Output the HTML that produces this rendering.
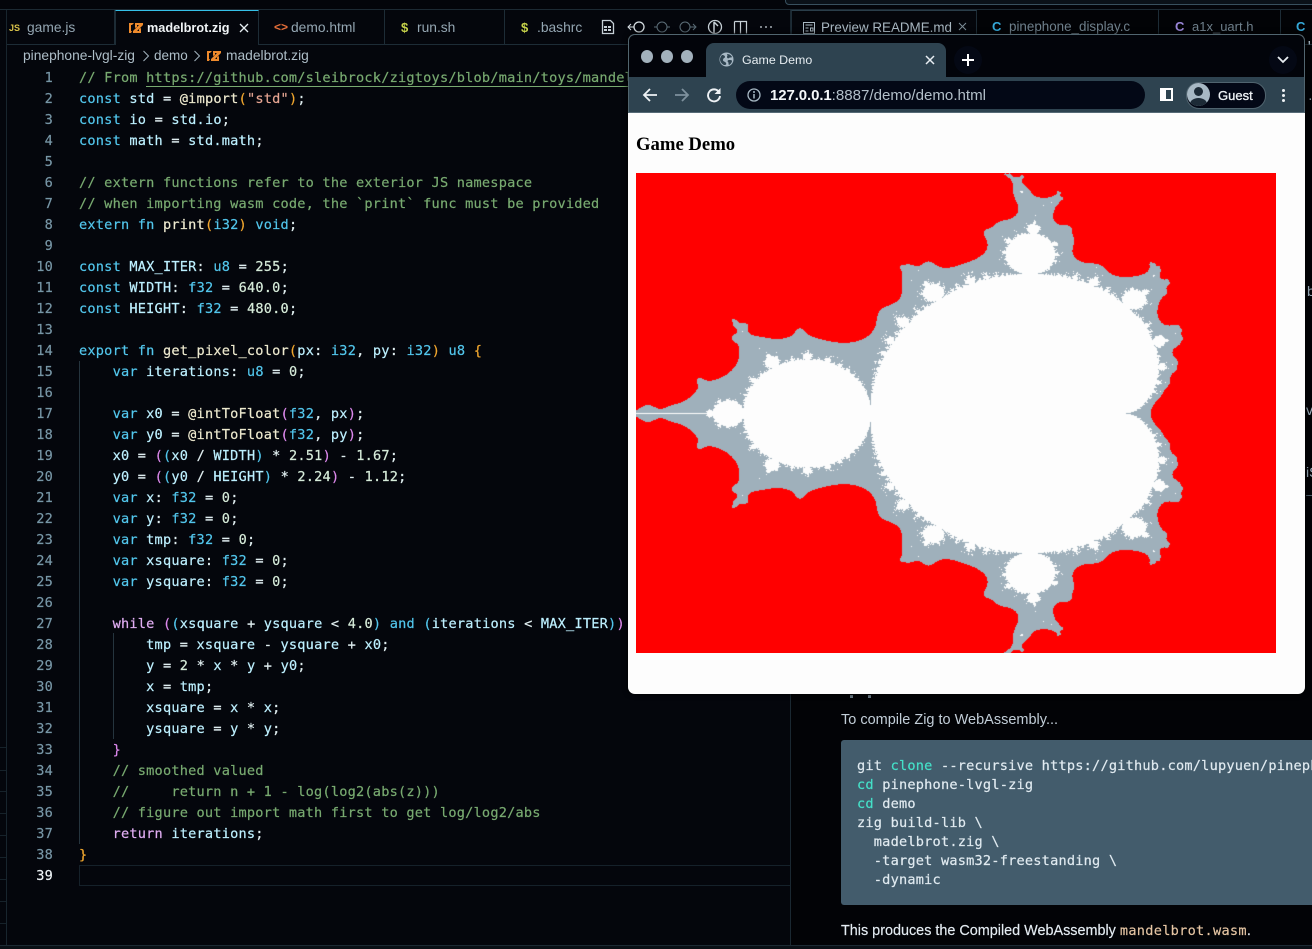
<!DOCTYPE html>
<html><head><meta charset="utf-8">
<style>
html,body{margin:0;padding:0;background:#04060c;width:1312px;height:949px;overflow:hidden}
.a{position:absolute}
#code,#nums{position:absolute;top:68px;margin:0;font:13.6px/21px "DejaVu Sans Mono","Liberation Mono",monospace;letter-spacing:.21px;white-space:pre;-webkit-text-stroke:.2px}
#code{left:79px;color:#bdf0ff}
#nums{left:20px;width:33px;text-align:right;color:#7796a6}
#nums b{color:#eef4f7;font-weight:normal}
.c{color:#78aa70}.k{color:#52c6ec}.f{color:#eeeacf}.s{color:#e6a592}.o{color:#f0a62e}.p{color:#dc88ec}.n{color:#d6ebd9}.w{color:#e0adf2}.t{color:#52c6ec}.u{color:#e0eef0}
.tab{position:absolute;top:10px;height:34px;border-right:1px solid #1d2c36;font:13.8px/36px "Liberation Sans",sans-serif;color:#94a6b2;box-sizing:border-box;white-space:nowrap;overflow:hidden}
.tab span{position:absolute}
.ic{position:absolute;font-weight:bold}
</style></head><body>
<div class="a" style="left:0;top:0;width:1312px;height:949px;background:#04060c;overflow:hidden">

<!-- top bar -->
<div class="a" style="left:0;top:0;width:1312px;height:10px;background:#03050a;border-bottom:1px solid #1c2a33;box-sizing:border-box"></div>
<div class="a" style="left:785px;top:-8px;width:540px;height:11px;border:1px solid #38505e;border-radius:4px;background:#0a1118"></div>
<!-- left sidebar edge -->
<div class="a" style="left:6px;top:10px;width:1px;height:935px;background:#18252e"></div>
<div class="a" style="left:0;top:747px;width:6px;height:1px;background:#16222a"></div>
<div class="a" style="left:0;top:770px;width:6px;height:1px;background:#16222a"></div>
<div class="a" style="left:0;top:791px;width:6px;height:1px;background:#16222a"></div>
<div class="a" style="left:0;top:813px;width:6px;height:1px;background:#16222a"></div>
<div class="a" style="left:0;top:835px;width:6px;height:1px;background:#16222a"></div>
<div class="a" style="left:0;top:857px;width:6px;height:1px;background:#16222a"></div>
<div class="a" style="left:0;top:879px;width:6px;height:1px;background:#16222a"></div>
<div class="a" style="left:0;top:901px;width:6px;height:1px;background:#16222a"></div>
<div class="a" style="left:0;top:923px;width:6px;height:1px;background:#16222a"></div>
<div class="a" style="left:0;top:945px;width:1312px;height:1px;background:#1c2a33"></div>
<div class="a" style="left:0;top:946px;width:1312px;height:3px;background:#0a1016"></div>

<!-- left tabs -->
<div class="a" style="left:7px;top:44px;width:783px;height:1px;background:#1d2c36"></div>
<div class="tab" style="left:7px;width:108px;"><span class="ic" style="left:2px;font-size:9px;color:#d8c24a">JS</span><span style="left:20px">game.js</span></div>
<div class="tab" style="left:115px;width:144px;background:#04060c;border-top:1px solid #35c0e8;border-right:1px solid #1d2c36;border-left:1px solid #1d2c36;height:35px;color:#f0f4f6;font-weight:bold;font-size:12.7px;line-height:34px;z-index:2">
  <svg class="ic" style="left:13px;top:11px" width="14" height="12" viewBox="0 0 14 12"><path d="M0 1h5L3 3H2v6h1l-1 2H0zM6 1h8v2L8 9h2V7l2-1v5H4v-2l6-6H8v2L6 6z" fill="#ee8a2c"/></svg>
  <span style="left:31px">madelbrot.zig</span>
  <svg class="ic" style="left:123px;top:12px" width="10" height="10" viewBox="0 0 10 10"><path d="M1 1l8 8M9 1l-8 8" stroke="#e6eef2" stroke-width="1.3" fill="none"/></svg>
</div>
<div class="tab" style="left:259px;width:126px;"><span class="ic" style="left:15px;font-size:12px;color:#e8703a;top:-1px">&lt;&gt;</span><span style="left:32px">demo.html</span></div>
<div class="tab" style="left:385px;width:120px;"><span class="ic" style="left:16px;color:#c6d24a;font-size:13px">$</span><span style="left:32px">run.sh</span></div>
<div class="tab" style="left:505px;width:90px;border-right:none"><span class="ic" style="left:16px;color:#c6d24a;font-size:13px">$</span><span style="left:32px">.bashrc</span></div>

<!-- editor actions -->
<svg class="a" style="left:600px;top:18px" width="185" height="18" viewBox="0 0 185 18" fill="none" stroke="#c6d0d6" stroke-width="1">
  <path d="M2.500 2.500h8l3 3v10h-11z" stroke-width="1.300"/><path d="M4 8h3v2h-3zM8 8h3v2h-3zM4 11h3v2h-3zM8 11h3v2h-3z" fill="#c6d0d6" stroke="none"/>
  <circle cx="39" cy="9" r="5" stroke="#d6dee2" stroke-width="1.300"/><path d="M34 9h-6M31 6l-3 3 3 3" stroke="#d6dee2"/>
  <circle cx="62" cy="9" r="5" stroke="#5c6e78"/><path d="M57 9h-3M67 9h3" stroke="#5c6e78"/>
  <circle cx="85" cy="9" r="5" stroke="#5c6e78"/><path d="M90 9h5M93 6l3 3-3 3" stroke="#5c6e78"/>
  <circle cx="115" cy="9" r="6.500" stroke-width="1.300"/><path d="M114 4v11M114 4l4 4" stroke-width="1.500"/>
  <path d="M134.500 3.500h12v12M134.500 3.500v12M140.500 3.500v12" stroke-width="1.200"/>
  <path d="M160 9h2M165 9h2M170 9h2" stroke-width="1.300"/>
</svg>

<!-- breadcrumbs -->
<div class="a" style="left:23px;top:46px;height:20px;font:13.8px/20px 'Liberation Sans',sans-serif;color:#aebec8;white-space:pre">pinephone-lvgl-zig</div>
<svg class="a" style="left:142px;top:50px" width="8" height="12" viewBox="0 0 8 12"><path d="M1.500 1l5 5-5 5" stroke="#a3b4bf" fill="none"/></svg>
<div class="a" style="left:154px;top:46px;font:13.5px/20px 'Liberation Sans',sans-serif;color:#aebec8">demo</div>
<svg class="a" style="left:193px;top:50px" width="8" height="12" viewBox="0 0 8 12"><path d="M1.500 1l5 5-5 5" stroke="#a3b4bf" fill="none"/></svg>
<svg class="a" style="left:207px;top:50px" width="14" height="12" viewBox="0 0 14 12"><path d="M0 1h5L3 3H2v6h1l-1 2H0zM6 1h8v2L8 9h2V7l2-1v5H4v-2l6-6H8v2L6 6z" fill="#ee8a2c"/></svg>
<div class="a" style="left:226px;top:46px;font:13.8px/20px 'Liberation Sans',sans-serif;color:#aebec8">madelbrot.zig</div>

<!-- guides & current line -->
<div class="a" style="left:79px;top:361px;width:1px;height:483px;background:#25343e"></div>
<div class="a" style="left:113px;top:633px;width:1px;height:106px;background:#25343e"></div>
<div class="a" style="left:79px;top:865px;width:711px;height:21px;border:1px solid #15212a;border-right:none;box-sizing:border-box"></div>
<div class="a" style="left:146px;top:86px;width:500px;height:1px;background:#78aa70"></div>

<pre id="nums">1
2
3
4
5
6
7
8
9
10
11
12
13
14
15
16
17
18
19
20
21
22
23
24
25
26
27
28
29
30
31
32
33
34
35
36
37
38
<b>39</b></pre>
<pre id="code"><span class="c">// From https://github.com/sleibrock/zigtoys/blob/main/toys/mandelbrot.zig</span>
<span class="k">const</span> std <span class="u">=</span> <span class="f">@import</span><span class="o">(</span><span class="s">"std"</span><span class="o">)</span><span class="u">;</span>
<span class="k">const</span> io <span class="u">=</span> std.io<span class="u">;</span>
<span class="k">const</span> math <span class="u">=</span> std.math<span class="u">;</span>

<span class="c">// extern functions refer to the exterior JS namespace</span>
<span class="c">// when importing wasm code, the `print` func must be provided</span>
<span class="k">extern fn</span> <span class="f">print</span><span class="o">(</span><span class="k">i32</span><span class="o">)</span> <span class="k">void</span><span class="u">;</span>

<span class="k">const</span> MAX_ITER<span class="u">:</span> <span class="k">u8</span> <span class="u">=</span> <span class="n">255</span><span class="u">;</span>
<span class="k">const</span> WIDTH<span class="u">:</span> <span class="k">f32</span> <span class="u">=</span> <span class="n">640.0</span><span class="u">;</span>
<span class="k">const</span> HEIGHT<span class="u">:</span> <span class="k">f32</span> <span class="u">=</span> <span class="n">480.0</span><span class="u">;</span>

<span class="k">export fn</span> <span class="f">get_pixel_color</span><span class="o">(</span>px<span class="u">:</span> <span class="k">i32</span><span class="u">,</span> py<span class="u">:</span> <span class="k">i32</span><span class="o">)</span> <span class="k">u8</span> <span class="o">{</span>
    <span class="k">var</span> iterations<span class="u">:</span> <span class="k">u8</span> <span class="u">=</span> <span class="n">0</span><span class="u">;</span>

    <span class="k">var</span> x0 <span class="u">=</span> <span class="f">@intToFloat</span><span class="p">(</span><span class="k">f32</span><span class="u">,</span> px<span class="p">)</span><span class="u">;</span>
    <span class="k">var</span> y0 <span class="u">=</span> <span class="f">@intToFloat</span><span class="p">(</span><span class="k">f32</span><span class="u">,</span> py<span class="p">)</span><span class="u">;</span>
    x0 <span class="u">=</span> <span class="p">(</span><span class="t">(</span>x0 <span class="u">/</span> WIDTH<span class="t">)</span> <span class="u">*</span> <span class="n">2.51</span><span class="p">)</span> <span class="u">-</span> <span class="n">1.67</span><span class="u">;</span>
    y0 <span class="u">=</span> <span class="p">(</span><span class="t">(</span>y0 <span class="u">/</span> HEIGHT<span class="t">)</span> <span class="u">*</span> <span class="n">2.24</span><span class="p">)</span> <span class="u">-</span> <span class="n">1.12</span><span class="u">;</span>
    <span class="k">var</span> x<span class="u">:</span> <span class="k">f32</span> <span class="u">=</span> <span class="n">0</span><span class="u">;</span>
    <span class="k">var</span> y<span class="u">:</span> <span class="k">f32</span> <span class="u">=</span> <span class="n">0</span><span class="u">;</span>
    <span class="k">var</span> tmp<span class="u">:</span> <span class="k">f32</span> <span class="u">=</span> <span class="n">0</span><span class="u">;</span>
    <span class="k">var</span> xsquare<span class="u">:</span> <span class="k">f32</span> <span class="u">=</span> <span class="n">0</span><span class="u">;</span>
    <span class="k">var</span> ysquare<span class="u">:</span> <span class="k">f32</span> <span class="u">=</span> <span class="n">0</span><span class="u">;</span>

    <span class="w">while</span> <span class="p">(</span><span class="t">(</span>xsquare <span class="u">+</span> ysquare <span class="u">&lt;</span> <span class="n">4.0</span><span class="t">)</span> <span class="k">and</span> <span class="t">(</span>iterations <span class="u">&lt;</span> MAX_ITER<span class="t">)</span><span class="p">)</span> <span class="p">{</span>
        tmp <span class="u">=</span> xsquare <span class="u">-</span> ysquare <span class="u">+</span> x0<span class="u">;</span>
        y <span class="u">=</span> <span class="n">2</span> <span class="u">*</span> x <span class="u">*</span> y <span class="u">+</span> y0<span class="u">;</span>
        x <span class="u">=</span> tmp<span class="u">;</span>
        xsquare <span class="u">=</span> x <span class="u">*</span> x<span class="u">;</span>
        ysquare <span class="u">=</span> y <span class="u">*</span> y<span class="u">;</span>
    <span class="p">}</span>
    <span class="c">// smoothed valued</span>
    <span class="c">//     return n + 1 - log(log2(abs(z)))</span>
    <span class="c">// figure out import math first to get log/log2/abs</span>
    <span class="w">return</span> iterations<span class="u">;</span>
<span class="o">}</span>
</pre>

<!-- right panel -->
<div class="a" style="left:790px;top:10px;width:522px;height:935px;background:#020306;border-left:1px solid #1a2831;box-sizing:border-box"></div>
<div class="tab" style="left:791px;width:186px;border-left:1px solid #1d2c36;border-top:1px solid #2a3e4a;background:#04060b;color:#a9b8c2;font-size:13.4px;line-height:33px">
  <svg class="ic" style="left:10px;top:10px" width="14" height="14" viewBox="0 0 14 14" fill="none" stroke="#a9b8c2"><path d="M1.500 1.500h11v11h-11zM3.500 4h7M3.500 7h3M3.500 10h3M8.500 7h2.500v3h-2.500z"/></svg>
  <span style="left:29px">Preview README.md</span>
  <svg class="ic" style="left:166px;top:11px" width="9" height="9" viewBox="0 0 9 9"><path d="M1 1l7 7M8 1l-7 7" stroke="#7d8e98" fill="none"/></svg>
</div>
<div class="tab" style="left:977px;width:182px;color:#6f808c;font-size:13.4px;line-height:34px"><span class="ic" style="left:15px;color:#35a8d8;font-size:13px">C</span><span style="left:32px">pinephone_display.c</span></div>
<div class="tab" style="left:1159px;width:122px;color:#6f808c;font-size:13px;line-height:34px"><span class="ic" style="left:16px;color:#9a86d8;font-size:13px">C</span><span style="left:33px">a1x_uart.h</span></div>
<div class="tab" style="left:1281px;width:31px;border-right:none;line-height:34px"><span class="ic" style="left:15px;color:#35a8d8;font-size:13px">C</span></div>
<div class="a" style="left:791px;top:44px;width:521px;height:1px;background:#1d2c36"></div>

<div class="a" style="left:1306px;top:41px;font:bold 11px/12px 'Liberation Mono',monospace;color:#a8bac6">':</div>
<div class="a" style="left:1307px;top:92px;font:11px/12px 'Liberation Mono',monospace;color:#8a9ca8">..</div>
<div class="a" style="left:1307px;top:283px;font:14px/16px 'Liberation Sans',sans-serif;color:#9fb2c0">b</div>
<div class="a" style="left:1306px;top:402px;font:14px/16px 'Liberation Sans',sans-serif;color:#9fb2c0">v</div>
<div class="a" style="left:1306px;top:464px;font:14px/16px 'Liberation Sans',sans-serif;color:#9fb2c0">iS</div>
<div class="a" style="left:1306px;top:495px;width:6px;height:1px;background:#4a5c68"></div>
<div class="a" style="left:850px;top:695px;width:3px;height:3px;background:#6d7e8a"></div>
<div class="a" style="left:868px;top:695px;width:3px;height:3px;background:#6d7e8a"></div>

<div class="a" style="left:841px;top:712px;font:14.5px/16px 'Liberation Sans',sans-serif;color:#c2ced8;white-space:nowrap">To compile Zig to WebAssembly...</div>
<div class="a" style="left:841px;top:740px;width:480px;height:165px;background:#435c6c;border-radius:3px"></div>
<pre class="a" style="left:857px;top:757px;margin:0;font:13.6px/19px 'DejaVu Sans Mono','Liberation Mono',monospace;letter-spacing:.21px;color:#e0eaf0;white-space:pre;width:455px;overflow:hidden;-webkit-text-stroke:.2px">git <span style="color:#45e0c8">clone</span> --recursive https://github.com/lupyuen/pinephone-lvgl-zig
<span style="color:#45e0c8">cd</span> pinephone-lvgl-zig
<span style="color:#45e0c8">cd</span> demo
zig build-lib \
  madelbrot.zig \
  -target wasm32-freestanding \
  -dynamic</pre>
<div class="a" style="left:841px;top:923px;font:14.4px/16px 'Liberation Sans',sans-serif;color:#e4ecf2;white-space:nowrap;-webkit-text-stroke:.15px">This produces the Compiled WebAssembly <span style="font:13.6px/16px 'DejaVu Sans Mono','Liberation Mono',monospace;letter-spacing:.28px;color:#e6c6a4">mandelbrot.wasm</span>.</div>

<!-- browser window -->
<div class="a" style="left:628px;top:34px;width:677px;height:660px;border-radius:7px;background:#fdfdfd;overflow:hidden;box-shadow:0 0 6px rgba(0,0,0,.9)">
  <div class="a" style="left:0;top:0;width:677px;height:43px;background:#02040a"></div>
  <div class="a" style="left:0;top:43px;width:677px;height:36px;background:#2e4350"></div>
  <div class="a" style="left:78px;top:9px;width:240px;height:36px;background:#2e4350;border-radius:8px 8px 0 0"></div>
  <div class="a" style="left:13px;top:16px;width:12px;height:13px;border-radius:50%;background:#a2b1bc"></div>
  <div class="a" style="left:33px;top:16px;width:12px;height:13px;border-radius:50%;background:#a2b1bc"></div>
  <div class="a" style="left:53px;top:16px;width:12px;height:13px;border-radius:50%;background:#a2b1bc"></div>
  <svg class="a" style="left:91px;top:18px" width="15" height="15" viewBox="0 0 15 15"><circle cx="7.500" cy="7.500" r="7" fill="#a7b8c4"/><path d="M3 3c2 0 3 1 3 2s-2 1-2 3 2 1 3 3-1 2-2 2c-2-1-4-3-4-6 0-1 1-3 2-4zM8 2c2 0 4 1 5 3-1 1-2 0-3 1s-2 0-2-1 1-1 0-3zM10 8c1 0 3 0 3 1s-1 3-3 4c-1-1 0-2-1-3s0-2 1-2z" fill="#2e4350"/></svg>
  <div class="a" style="left:114px;top:18px;font:12.4px/16px 'Liberation Sans',sans-serif;color:#e6edf1">Game Demo</div>
  <svg class="a" style="left:297px;top:21px" width="10" height="10" viewBox="0 0 10 10"><path d="M1 1l8 8M9 1l-8 8" stroke="#e8eef2" stroke-width="1.500" fill="none"/></svg>
  <div class="a" style="left:326px;top:12px;width:28px;height:28px;border-radius:50%;background:#040814"></div>
  <svg class="a" style="left:334px;top:20px" width="12" height="12" viewBox="0 0 12 12"><path d="M6 0v12M0 6h12" stroke="#fff" stroke-width="2" fill="none"/></svg>
  <div class="a" style="left:641px;top:12px;width:28px;height:28px;border-radius:50%;background:#040814"></div>
  <svg class="a" style="left:649px;top:22px" width="12" height="8" viewBox="0 0 12 8"><path d="M1 1l5 5 5-5" stroke="#e8eef2" stroke-width="1.800" fill="none"/></svg>

  <!-- toolbar -->
  <svg class="a" style="left:14px;top:53px" width="16" height="16" viewBox="0 0 16 16"><path d="M15 8H2M8 2L2 8l6 6" stroke="#eef2f5" stroke-width="1.800" fill="none"/></svg>
  <svg class="a" style="left:46px;top:53px" width="16" height="16" viewBox="0 0 16 16"><path d="M1 8h13M8 2l6 6-6 6" stroke="#7e919d" stroke-width="1.800" fill="none"/></svg>
  <svg class="a" style="left:78px;top:53px" width="16" height="16" viewBox="0 0 16 16"><path d="M13 5A6 6 0 1 0 14 9" stroke="#eef2f5" stroke-width="1.900" fill="none"/><path d="M14.500 1v6h-6z" fill="#eef2f5"/></svg>
  <div class="a" style="left:108px;top:47px;width:409px;height:28px;border-radius:14px;background:#030816"></div>
  <svg class="a" style="left:119px;top:54px" width="14" height="14" viewBox="0 0 14 14"><circle cx="7" cy="7" r="6" stroke="#a7b8c4" stroke-width="1.300" fill="none"/><path d="M7 6v4.500" stroke="#a7b8c4" stroke-width="1.500"/><circle cx="7" cy="4" r="1" fill="#a7b8c4"/></svg>
  <div class="a" style="left:142px;top:54px;font:bold 15px/16px 'Liberation Sans',sans-serif;color:#f4f7f9;white-space:nowrap;letter-spacing:-.1px">127.0.0.1<span style="color:#b2bfc9;font-weight:normal;font-size:15.1px;letter-spacing:0">:8887/demo/demo.html</span></div>
  <div class="a" style="left:532px;top:54px;width:13px;height:13px;background:#fff"></div>
  <div class="a" style="left:538px;top:56px;width:5px;height:9px;background:#2e4350"></div>
  <div class="a" style="left:558px;top:48px;width:78px;height:25px;border-radius:13px;background:#030816;border:1px solid #50646f"></div>
  <div class="a" style="left:559px;top:49px;width:23px;height:23px;border-radius:50%;background:#a7b8c4;overflow:hidden">
    <div class="a" style="left:7px;top:4px;width:9px;height:9px;border-radius:50%;background:#1c2a36"></div>
    <div class="a" style="left:3px;top:15px;width:17px;height:12px;border-radius:50%;background:#1c2a36"></div>
  </div>
  <div class="a" style="left:590px;top:54px;font:13px/16px 'Liberation Sans',sans-serif;color:#f0f4f7;-webkit-text-stroke:.3px">Guest</div>
  <div class="a" style="left:654px;top:55px;width:3px;height:3px;border-radius:50%;background:#eef2f5"></div>
  <div class="a" style="left:654px;top:60px;width:3px;height:3px;border-radius:50%;background:#eef2f5"></div>
  <div class="a" style="left:654px;top:65px;width:3px;height:3px;border-radius:50%;background:#eef2f5"></div>
  <div class="a" style="left:0;top:78px;width:677px;height:1px;background:#566a76"></div>
  <!-- chrome outline on the dark part only -->
  <div class="a" style="left:0;top:0;width:677px;height:79px;box-sizing:border-box;border:1px solid #51656f;border-bottom:none;border-radius:7px 7px 0 0"></div>

  <!-- page -->
  <div class="a" style="left:8px;top:99px;font:bold 18.7px/24px 'Liberation Serif',serif;color:#000;white-space:nowrap">Game Demo</div>
  <canvas id="m" class="a" style="left:8px;top:139px;background:#f00" width="640" height="480"></canvas>
</div>
</div>
<script>
(function(){
var c=document.getElementById('m').getContext('2d'),im=c.createImageData(640,480),d=im.data,fr=Math.fround;
for(var py=0;py<480;py++)for(var px=0;px<640;px++){
 var x0=fr(fr(fr(px/640)*fr(2.51))-fr(1.67)),y0=fr(fr(fr(py/480)*fr(2.24))-fr(1.12));
 var x=0,y=0,t=0,a=0,b=0,i=0;
 while(a+b<4&&i<255){t=fr(a-b+x0);y=fr(2*x*y+y0);x=t;a=fr(x*x);b=fr(y*y);i++;}
 var r=255,g=0,bl=0,dy=Math.abs(py-240);
 if(i>=85){r=g=bl=253;}
 else if(i>=9||(px<47&&dy<=3)||(px>=9&&px<=13&&dy<=5)||(px>=47&&px<65&&dy<=11)){r=159;g=176;bl=187;}
 var k=(py*640+px)*4;d[k]=r;d[k+1]=g;d[k+2]=bl;d[k+3]=255;
}
c.putImageData(im,0,0);
})();
</script>
</body></html>
